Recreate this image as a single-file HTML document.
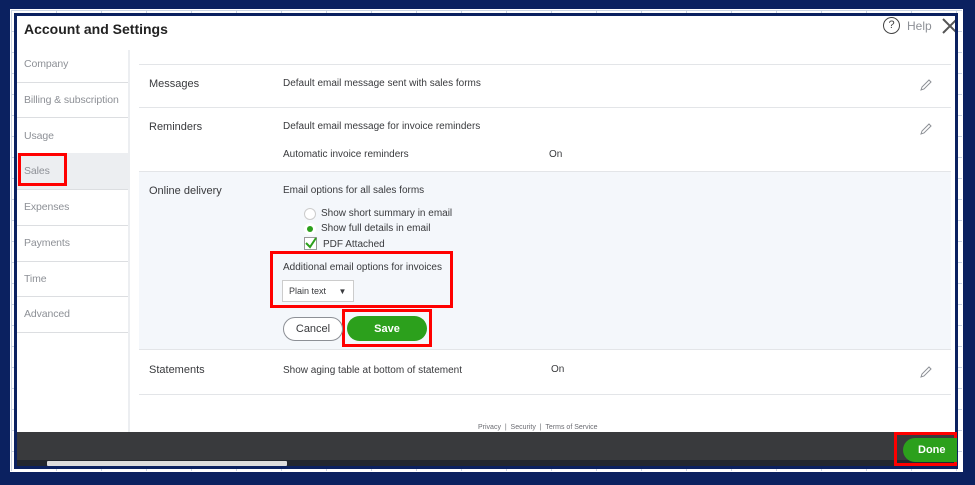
<!DOCTYPE html>
<html><head><style>
*{margin:0;padding:0;box-sizing:border-box}
body{width:975px;height:485px;overflow:hidden;background:#0b2160;font-family:"Liberation Sans",sans-serif;position:relative;color:#393a3d}
.a{position:absolute}
.grid{left:10px;top:9px;width:953px;height:463px;background-color:#fff;background-image:linear-gradient(#c9d3e3 1px,transparent 1px),linear-gradient(90deg,#c9d3e3 1px,transparent 1px);background-size:45px 21px;border:1px solid #fff}
.modal{left:14px;top:13px;width:944px;height:456px;background:#fff;border:3px solid #0b2160;overflow:hidden}
.t{font-size:11px;color:#393a3d;white-space:nowrap}
.side{font-size:10.5px;color:#8d9096;letter-spacing:-0.1px}
.hl{left:0;width:942px;height:1px;background:#e3e5e8}
.red{border:3px solid #ff0000}
</style></head><body>
<div class="a grid"></div>
<div class="a modal">
  <div class="a" style="left:7px;top:5px;font-size:14px;font-weight:bold;color:#222">Account and Settings</div>
  <div class="a" style="left:866px;top:1px;width:17px;height:17px;border:1.5px solid #444;border-radius:50%;font-size:11px;text-align:center;line-height:14px;color:#444">?</div>
  <div class="a" style="left:890px;top:3px;font-size:12px;color:#8d9096">Help</div>
  <svg class="a" style="left:924px;top:1px" width="18" height="18"><path d="M2 2L16 16M16 2L2 16" stroke="#555" stroke-width="2"/></svg>
  <div class="a" style="left:111px;top:34px;width:2px;height:390px;background:#eceef1"></div>
  <div class="a" style="left:0;top:137px;width:111px;height:36px;background:#eceef1"></div>
  <div class="a side" style="left:7px;top:42px">Company</div>
  <div class="a side" style="left:7px;top:78px">Billing &amp; subscription</div>
  <div class="a side" style="left:7px;top:114px">Usage</div>
  <div class="a side" style="left:7px;top:149px">Sales</div>
  <div class="a side" style="left:7px;top:185px">Expenses</div>
  <div class="a side" style="left:7px;top:221px">Payments</div>
  <div class="a side" style="left:7px;top:257px">Time</div>
  <div class="a side" style="left:7px;top:292px">Advanced</div>
  <div class="a" style="left:0;top:66px;width:111px;height:1px;background:#dcdee1"></div>
  <div class="a" style="left:0;top:101px;width:111px;height:1px;background:#dcdee1"></div>
  <div class="a" style="left:0;top:173px;width:111px;height:1px;background:#dcdee1"></div>
  <div class="a" style="left:0;top:209px;width:111px;height:1px;background:#dcdee1"></div>
  <div class="a" style="left:0;top:245px;width:111px;height:1px;background:#dcdee1"></div>
  <div class="a" style="left:0;top:280px;width:111px;height:1px;background:#dcdee1"></div>
  <div class="a" style="left:0;top:316px;width:111px;height:1px;background:#dcdee1"></div>
  <div class="a red" style="left:1px;top:137px;width:49px;height:33px"></div>
  <div class="a" style="left:122px;top:48px;width:812px;height:332px">
    <div class="a hl" style="top:0;width:812px"></div>
    <div class="a hl" style="top:43px;width:812px"></div>
    <div class="a" style="left:0;top:107px;width:812px;height:179px;background:#f4f7fb;border-top:1px solid #e3e5e8;border-bottom:1px solid #e3e5e8"></div>
    <div class="a hl" style="top:330px;width:812px"></div>
  </div>
  <div class="a t" style="left:132px;top:62px">Messages</div>
  <div class="a t" style="left:266px;top:62px;font-size:10px">Default email message sent with sales forms</div>
  <div class="a t" style="left:132px;top:105px">Reminders</div>
  <div class="a t" style="left:266px;top:105px;font-size:10px">Default email message for invoice reminders</div>
  <div class="a t" style="left:266px;top:133px;font-size:10px">Automatic invoice reminders</div>
  <div class="a t" style="left:532px;top:133px;font-size:10px">On</div>
  <div class="a t" style="left:132px;top:169px">Online delivery</div>
  <div class="a t" style="left:266px;top:169px;font-size:10px">Email options for all sales forms</div>
  <div class="a" style="left:287px;top:192px;width:12px;height:12px;border:1px solid #ccc;border-radius:50%;background:#fff"></div>
  <div class="a t" style="left:304px;top:192px;font-size:10px">Show short summary in email</div>
  <div class="a" style="left:287px;top:207px;width:12px;height:12px;border-radius:50%;background:#fff;"><div style="margin:3px;width:6px;height:6px;border-radius:50%;background:#2ca01c"></div></div>
  <div class="a t" style="left:304px;top:207px;font-size:10px">Show full details in email</div>
  <div class="a" style="left:287px;top:221px;width:13px;height:13px;border:1px solid #999;background:#fff"></div>
  <svg class="a" style="left:287px;top:220px" width="14" height="14"><path d="M2 7L6 11L12 2" stroke="#2ca01c" stroke-width="2" fill="none"/></svg>
  <div class="a t" style="left:306px;top:223px;font-size:10px">PDF Attached</div>
  <div class="a red" style="left:253px;top:235px;width:183px;height:57px"></div>
  <div class="a t" style="left:266px;top:246px;font-size:10px">Additional email options for invoices</div>
  <div class="a" style="left:265px;top:264px;width:72px;height:22px;border:1px solid #ccc;background:#fff;font-size:9px;padding:5px 0 0 6px">Plain text <span style="margin-left:10px;font-size:8px">▼</span></div>
  <div class="a red" style="left:325px;top:293px;width:90px;height:38px"></div>
  <div class="a" style="left:266px;top:301px;width:60px;height:24px;border:1px solid #8d9096;border-radius:12px;font-size:11px;text-align:center;line-height:22px;background:#fff">Cancel</div>
  <div class="a" style="left:330px;top:300px;width:80px;height:25px;border-radius:13px;background:#2ca01c;color:#fff;font-size:11px;font-weight:bold;text-align:center;line-height:26px">Save</div>
  <div class="a t" style="left:132px;top:348px">Statements</div>
  <div class="a t" style="left:266px;top:349px;font-size:10px">Show aging table at bottom of statement</div>
  <div class="a t" style="left:534px;top:348px;font-size:10px">On</div>
  <svg class="a" style="left:902px;top:62px" width="14" height="14"><path d="M2 12L3 9L10 2L12 4L5 11Z" stroke="#8d9096" fill="none"/></svg>
  <svg class="a" style="left:902px;top:106px" width="14" height="14"><path d="M2 12L3 9L10 2L12 4L5 11Z" stroke="#8d9096" fill="none"/></svg>
  <svg class="a" style="left:902px;top:349px" width="14" height="14"><path d="M2 12L3 9L10 2L12 4L5 11Z" stroke="#8d9096" fill="none"/></svg>
  <div class="a t" style="left:461px;top:408px;font-size:7px;color:#6b6c72">Privacy &nbsp;| &nbsp;Security &nbsp;| &nbsp;Terms of Service</div>
  <div class="a" style="left:0;top:416px;width:945px;height:30px;background:#393a3d"></div>
  <div class="a" style="left:0;top:444px;width:945px;height:7px;background:#23272e"></div>
  <div class="a" style="left:30px;top:445px;width:240px;height:5px;background:#ddd;border-radius:1px"></div>
</div>
<div class="a red" style="left:894px;top:432px;width:63px;height:34px"></div>
<div class="a" style="left:903px;top:438px;width:54px;height:24px;border-radius:12px 0 0 12px;background:#2ca01c;color:#fff;font-size:11px;font-weight:bold;line-height:24px;padding-left:15px">Done</div>
</body></html>
